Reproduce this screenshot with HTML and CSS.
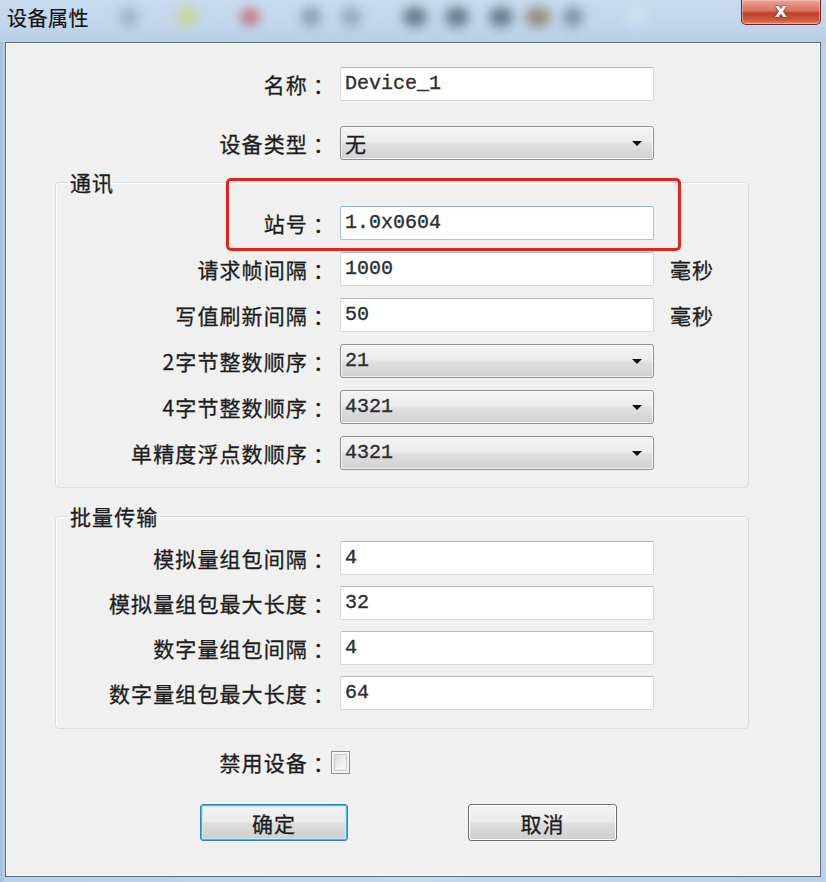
FILE: index.html
```html
<!DOCTYPE html>
<html lang="zh-CN">
<head>
<meta charset="utf-8">
<title>设备属性</title>
<link rel="stylesheet" href="styles.css">
</head>
<body>
<div class="window">
  <div class="titlebar">
    <span class="title">设备属性</span>
    <div class="blurs">
      <span class="blob b1"></span>
      <span class="blob b2"></span>
      <span class="blob b3"></span>
      <span class="blob b4"></span>
      <span class="blob b5"></span>
      <span class="blob b6"></span>
      <span class="blob b7"></span>
      <span class="blob b8"></span>
      <span class="blob b9"></span>
      <span class="blob b10"></span>
      <span class="blob b11"></span>
    </div>
    <div class="close">x</div>
  </div>
  <div class="client">
    <div class="row outer first">
      <label class="lbl">名称<span class="colon">：</span></label>
      <div class="edit">Device_1</div>
    </div>
    <div class="row outer second">
      <label class="lbl">设备类型<span class="colon">：</span></label>
      <div class="combo cjk">无<span class="arrow"></span></div>
    </div>

    <fieldset class="group g1">
      <legend>通讯</legend>
      <div class="rows r1">
        <div class="row inner">
          <label class="lbl">站号<span class="colon">：</span></label>
          <div class="edit focus">1.0x0604</div>
        </div>
        <div class="row inner">
          <label class="lbl">请求帧间隔<span class="colon">：</span></label>
          <div class="edit">1000</div>
          <span class="unit">毫秒</span>
        </div>
        <div class="row inner">
          <label class="lbl">写值刷新间隔<span class="colon">：</span></label>
          <div class="edit">50</div>
          <span class="unit">毫秒</span>
        </div>
        <div class="row inner">
          <label class="lbl">2字节整数顺序<span class="colon">：</span></label>
          <div class="combo">21<span class="arrow"></span></div>
        </div>
        <div class="row inner">
          <label class="lbl">4字节整数顺序<span class="colon">：</span></label>
          <div class="combo">4321<span class="arrow"></span></div>
        </div>
        <div class="row inner">
          <label class="lbl">单精度浮点数顺序<span class="colon">：</span></label>
          <div class="combo">4321<span class="arrow"></span></div>
        </div>
      </div>
    </fieldset>

    <fieldset class="group g2">
      <legend>批量传输</legend>
      <div class="rows r2">
        <div class="row inner">
          <label class="lbl">模拟量组包间隔<span class="colon">：</span></label>
          <div class="edit">4</div>
        </div>
        <div class="row inner">
          <label class="lbl">模拟量组包最大长度<span class="colon">：</span></label>
          <div class="edit">32</div>
        </div>
        <div class="row inner">
          <label class="lbl">数字量组包间隔<span class="colon">：</span></label>
          <div class="edit">4</div>
        </div>
        <div class="row inner">
          <label class="lbl">数字量组包最大长度<span class="colon">：</span></label>
          <div class="edit">64</div>
        </div>
      </div>
    </fieldset>

    <div class="checkrow">
      <label class="lbl">禁用设备<span class="colon">：</span></label>
      <span class="checkbox"></span>
    </div>

    <div class="buttons">
      <button class="btn default">确定</button>
      <button class="btn">取消</button>
    </div>
  </div>
  <div class="annot"></div>
</div>
</body>
</html>
```

FILE: styles.css
```css
* { box-sizing: border-box; }

html, body {
  margin: 0;
  padding: 0;
}

body {
  width: 826px;
  height: 882px;
  overflow: hidden;
  font-family: "Noto Sans CJK SC", "Noto Sans", sans-serif;
  color: #1e1e1e;
}

.window {
  position: relative;
  width: 826px;
  height: 882px;
  background: linear-gradient(to right, #9fbcdc 0px, #b9d0e9 5px, #c4d8ee 50%, #bcd2ea 100%);
  display: flex;
  flex-direction: column;
}

/* ---------- title bar ---------- */
.titlebar {
  height: 42px;
  display: flex;
  align-items: flex-start;
  background: linear-gradient(to bottom, #c8dbef 0%, #c1d6ed 60%, #b8cfe8 100%);
  position: relative;
}

.title {
  font-size: 20px;
  line-height: 20px;
  margin: 8px 0 0 7px;
  color: #111;
  letter-spacing: 0.5px;
  -webkit-text-stroke: 0.2px #111;
}

.blurs {
  display: flex;
  align-items: center;
  height: 34px;
  margin-left: 30px;
}

.blob {
  display: block;
  width: 20px;
  height: 20px;
  border-radius: 50%;
  filter: blur(6px);
  opacity: 0.7;
}
.b1 { background: #8ea3b8; margin-left: 0; }
.b2 { background: #c8d46a; margin-left: 38px; }
.b3 { background: #c4343a; margin-left: 44px; width: 18px; height: 16px; }
.b4 { background: #6f8196; margin-left: 42px; }
.b5 { background: #7f91a5; margin-left: 20px; }
.b6 { background: #3e4c5c; margin-left: 42px; width: 24px; }
.b7 { background: #3e4c5c; margin-left: 18px; width: 24px; }
.b8 { background: #3e4c5c; margin-left: 20px; width: 24px; }
.b9 { background: #7b6a48; margin-left: 12px; width: 26px; }
.b10 { background: #5d6d80; margin-left: 12px; }
.b11 { background: #dfe8f2; margin-left: 44px; opacity: 0.5; }

.close {
  position: absolute;
  left: 741px;
  top: 0;
  width: 80px;
  height: 25px;
  border: 1px solid #6e2a22;
  border-top: none;
  border-radius: 0 0 5px 5px;
  background: linear-gradient(to bottom, #e9a89b 0%, #d6705d 45%, #c33d28 55%, #cf5a44 85%, #e08a74 100%);
  box-shadow: inset 0 0 0 1px rgba(255, 210, 200, 0.5);
  color: #fff;
  font-family: "DejaVu Sans", sans-serif;
  font-weight: bold;
  font-size: 19px;
  line-height: 21px;
  text-align: center;
  text-shadow: 0 0 2px #5a1a12, 0 0 1px #5a1a12;
}

/* ---------- client area ---------- */
.client {
  flex: 1;
  margin: 0 5px 5px 5px;
  background: #f0f0f0;
  border: 1px solid #5d6c7d;
  box-shadow: inset 0 0 0 1px #ffffff;
  display: flex;
  flex-direction: column;
}

.row {
  display: grid;
  grid-template-columns: var(--lw) 314px auto;
  column-gap: 10px;
  height: 34px;
  align-items: center;
}

.row.outer { --lw: 324px; }
.row.inner { --lw: 274px; }

.row.first { margin-top: 24px; }
.row.second { margin-top: 25px; }

.lbl {
  font-size: 21px;
  line-height: 24px;
  text-align: right;
  white-space: nowrap;
  color: #1c1c1c;
  letter-spacing: 1.1px;
  -webkit-text-stroke: 0.3px #1c1c1c;
}

.colon {
  font-family: "Noto Sans CJK TC", "Noto Sans CJK SC", sans-serif;
  padding-left: 5px;
  margin-right: -5px;
}

.edit {
  height: 34px;
  background: #ffffff;
  border: 1px solid #d7d9dc;
  border-top-color: #b5b8bc;
  border-radius: 2px;
  padding: 0 4px;
  font-family: "Liberation Mono", "DejaVu Sans Mono", monospace;
  font-size: 20px;
  line-height: 32px;
  color: #2e2e2e;
  -webkit-text-stroke: 0.35px #2e2e2e;
}

.edit.focus {
  border-color: #a9c3dc;
  border-top-color: #8fb0cf;
}

.combo {
  position: relative;
  height: 34px;
  border: 1px solid #8d8f91;
  border-radius: 3px;
  background: linear-gradient(to bottom, #f4f4f4 0%, #ececec 45%, #dedede 55%, #d2d2d2 100%);
  box-shadow: inset 0 0 0 1px rgba(255, 255, 255, 0.7);
  padding: 0 4px;
  font-family: "Liberation Mono", "DejaVu Sans Mono", monospace;
  font-size: 20px;
  line-height: 32px;
  color: #2e2e2e;
  -webkit-text-stroke: 0.35px #2e2e2e;
}

.combo.cjk {
  font-family: "Noto Sans CJK SC", sans-serif;
  font-size: 21px;
  color: #1c1c1c;
  -webkit-text-stroke: 0.3px #1c1c1c;
}

.arrow {
  position: absolute;
  right: 11px;
  top: 14px;
  width: 0;
  height: 0;
  border-left: 5px solid transparent;
  border-right: 5px solid transparent;
  border-top: 5px solid #111;
}

.unit {
  font-size: 21px;
  line-height: 24px;
  margin-left: 6px;
  letter-spacing: 1.1px;
  color: #1c1c1c;
  -webkit-text-stroke: 0.3px #1c1c1c;
}

/* ---------- group boxes ---------- */
.group {
  margin: 0 0 0 49px;
  width: 694px;
  padding: 0;
  border: 1px solid #d6dde3;
  border-radius: 4px;
  box-shadow: inset 1px 1px 0 #ffffff;
}

.group legend {
  font-size: 21px;
  line-height: 24px;
  padding: 0 2px;
  margin-left: 12px;
  letter-spacing: 1.1px;
  color: #1c1c1c;
  -webkit-text-stroke: 0.3px #1c1c1c;
}

.g1 { margin-top: 10px; }
.g2 { margin-top: 16px; }

.rows {
  display: flex;
  flex-direction: column;
}

.r1 { gap: 12px; padding: 12px 0 17px 0; }
.r2 { gap: 11px; padding: 13px 0 18px 0; }

/* ---------- checkbox ---------- */
.checkrow {
  display: flex;
  align-items: center;
  height: 24px;
  margin-top: 21px;
}

.checkrow .lbl {
  width: 324px;
}

.checkbox {
  display: block;
  width: 19px;
  height: 23px;
  margin-left: 1px;
  border: 1px solid #8e8f8f;
  background: linear-gradient(135deg, #d6d6d6 0%, #f2f2f2 60%, #fafafa 100%);
  box-shadow: inset 0 0 0 2px #f4f4f4, inset 0 0 0 3px #c9c9c9;
}

/* ---------- buttons ---------- */
.buttons {
  display: flex;
  margin-top: 30px;
  padding-left: 194px;
  gap: 120px;
}

.btn {
  width: 149px;
  height: 37px;
  border: 1px solid #707070;
  border-radius: 3px;
  background: linear-gradient(to bottom, #f3f3f3 0%, #ebebeb 48%, #dddddd 52%, #cfcfcf 100%);
  box-shadow: inset 0 0 0 1px #fcfcfc;
  font-family: "Noto Sans CJK SC", sans-serif;
  font-size: 21px;
  line-height: 24px;
  color: #1c1c1c;
  padding: 0;
  letter-spacing: 1px;
  -webkit-text-stroke: 0.3px #1c1c1c;
}

.btn.default {
  width: 148px;
  border-color: #3c7fb1;
  box-shadow: inset 0 0 0 1px #48b6e6, inset 0 0 0 2px #c5e7f8;
}

/* ---------- annotation ---------- */
.annot {
  position: absolute;
  left: 226px;
  top: 178px;
  width: 455px;
  height: 73px;
  border: 3px solid #e3241c;
  border-radius: 5px;
  pointer-events: none;
}
```
